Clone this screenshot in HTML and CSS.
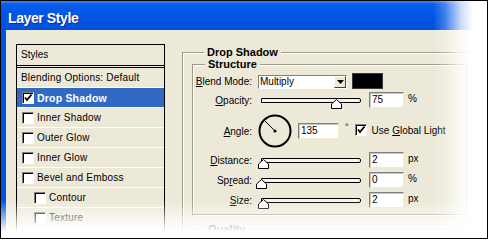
FILE: index.html
```html
<!DOCTYPE html>
<html lang="en">
  <head>
    <meta charset="UTF-8" />
    <title>Layer Style</title>
    <link rel="stylesheet" href="styles.css">
  </head>
  <body>
    <div class="shot">
      <div class="titlebar">Layer Style</div>

      <div class="window">
        <div class="styles-list">
          <div class="list-head">Styles</div>
          <div class="list-row">Blending Options: Default</div>
          <div class="list-row selected">
            <span class="check">
              <svg width="10" height="10" viewBox="0 0 10 10"><path d="M2 4.5 L4 7 L8.5 1.5" fill="none" stroke="#000" stroke-width="1.8"/></svg>
            </span>
            <span>Drop Shadow</span>
          </div>
          <div class="list-row"><span class="check"></span><span>Inner Shadow</span></div>
          <div class="list-row"><span class="check"></span><span>Outer Glow</span></div>
          <div class="list-row"><span class="check"></span><span>Inner Glow</span></div>
          <div class="list-row"><span class="check"></span><span>Bevel and Emboss</span></div>
          <div class="list-row sub"><span class="check"></span><span>Contour</span></div>
          <div class="list-row sub"><span class="check"></span><span>Texture</span></div>
        </div>

        <div class="settings">
          <div class="group">
            <div class="group-title">Drop Shadow</div>
            <div class="group inner">
              <div class="group-title">Structure</div>

              <div class="row row-blend">
                <span class="label"><u>B</u>lend Mode:</span>
                <span class="select">
                  <span class="select-text">Multiply</span>
                  <span class="select-btn">
                    <svg width="7" height="4" viewBox="0 0 7 4"><path d="M0 0 H7 L3.5 4 Z" fill="#000"/></svg>
                  </span>
                </span>
                <span class="swatch"></span>
              </div>

              <div class="row row-opacity">
                <span class="label"><u>O</u>pacity:</span>
                <span class="slider">
                  <span class="track"></span>
                  <svg class="thumb" style="left: 81px" width="11" height="10" viewBox="0 0 11 10"><path d="M5.5 0.5 L10.5 5 V9.5 H0.5 V5 Z" fill="#fff" stroke="#000"/></svg>
                </span>
                <span class="field">75</span>
                <span class="unit">%</span>
              </div>

              <div class="row row-angle">
                <span class="label"><u>A</u>ngle:</span>
                <svg class="dial" width="34" height="34" viewBox="0 0 34 34">
                  <circle cx="17" cy="17" r="15.5" fill="none" stroke="#000" stroke-width="2"/>
                  <path d="M17 17 L6.5 6.5" stroke="#000" stroke-width="1"/>
                  <circle cx="17" cy="17" r="1.6" fill="#000"/>
                </svg>
                <span class="field wide">135</span>
                <span class="degree">°</span>
                <span class="check">
                  <svg width="10" height="10" viewBox="0 0 10 10"><path d="M2 4.5 L4 7 L8.5 1.5" fill="none" stroke="#000" stroke-width="1.8"/></svg>
                </span>
                <span class="check-label">Use <u>G</u>lobal Light</span>
              </div>

              <div class="row">
                <span class="label"><u>D</u>istance:</span>
                <span class="slider">
                  <span class="track"></span>
                  <svg class="thumb" style="left: 8px" width="11" height="10" viewBox="0 0 11 10"><path d="M5.5 0.5 L10.5 5 V9.5 H0.5 V5 Z" fill="#fff" stroke="#000"/></svg>
                </span>
                <span class="field">2</span>
                <span class="unit">px</span>
              </div>

              <div class="row">
                <span class="label">Sp<u>r</u>ead:</span>
                <span class="slider">
                  <span class="track"></span>
                  <svg class="thumb" style="left: 6px" width="11" height="10" viewBox="0 0 11 10"><path d="M5.5 0.5 L10.5 5 V9.5 H0.5 V5 Z" fill="#fff" stroke="#000"/></svg>
                </span>
                <span class="field">0</span>
                <span class="unit">%</span>
              </div>

              <div class="row">
                <span class="label"><u>S</u>ize:</span>
                <span class="slider">
                  <span class="track"></span>
                  <svg class="thumb" style="left: 8px" width="11" height="10" viewBox="0 0 11 10"><path d="M5.5 0.5 L10.5 5 V9.5 H0.5 V5 Z" fill="#fff" stroke="#000"/></svg>
                </span>
                <span class="field">2</span>
                <span class="unit">px</span>
              </div>
            </div>

            <div class="group inner quality">
              <div class="group-title">Quality</div>
            </div>
          </div>
        </div>
      </div>

      <div class="fade-right"></div>
      <div class="fade-bottom"></div>
    </div>
  </body>
</html>
```

FILE: styles.css
```css
* {
  box-sizing: border-box;
}
body {
  margin: 0;
  background: #fff;
  font-family: "Liberation Sans", Arial, sans-serif;
  font-size: 10px;
  color: #000;
}
.shot {
  position: relative;
  width: 488px;
  height: 239px;
  border: 1px solid #000;
  overflow: hidden;
  display: flex;
  flex-direction: column;
}
.titlebar {
  flex: none;
  height: 29px;
  padding: 7px 0 0 7px;
  line-height: 20px;
  font-size: 14px;
  font-weight: bold;
  letter-spacing: -0.4px;
  color: #fff;
  text-shadow: 1px 1px 0 #0b2a9c;
  background: linear-gradient(#3d8cff 0, #0b5de9 3px, #0056e6 45%, #0050da 100%);
}
.window {
  flex: 1;
  display: flex;
  align-items: flex-start;
  background: #ece9d8;
  border-left: 5px solid #0052e0;
  padding: 14px 0 0 10px;
}

/* styles list */
.styles-list {
  flex: none;
  width: 149px;
  height: 194px;
  border: 1px solid #000;
  border-bottom: 0;
}
.list-head {
  height: 23px;
  line-height: 20px;
  padding-left: 4px;
  border-bottom: 3px double #000;
}
.list-row {
  display: flex;
  align-items: center;
  gap: 3px;
  height: 20px;
  padding-left: 4px;
  border-bottom: 1px solid #fff;
  white-space: nowrap;
  letter-spacing: 0.2px;
}
.list-row .check {
  margin-left: 1px;
}
.list-row.sub {
  padding-left: 16px;
}
.list-row.selected {
  background: #316ac5;
  color: #fff;
  font-weight: bold;
  font-size: 10.5px;
}
.check {
  flex: none;
  display: flex;
  align-items: center;
  justify-content: center;
  width: 12px;
  height: 12px;
  background: #fff;
  border: 1px solid;
  border-color: #808080 #fff #fff #808080;
  box-shadow: inset 1px 1px 0 #000;
}

/* settings panel */
.settings {
  flex: 1;
  margin: 8px 10px 0 17px;
}
.group {
  padding: 0 9px;
  border: 1px solid #9d9a8b;
  box-shadow: 1px 1px 0 #fff, inset 1px 1px 0 #fff;
}
.group-title {
  display: table;
  margin: -7px 0 0 12px;
  padding: 0 3px;
  line-height: 12px;
  font-size: 11px;
  font-weight: bold;
  background: #ece9d8;
}
.group.inner {
  margin-top: 6px;
  padding: 0 0 4px 0;
}
.group.quality {
  margin-top: 14px;
  height: 30px;
}
.row {
  display: flex;
  align-items: center;
  height: 20px;
  white-space: nowrap;
}
.label {
  flex: none;
  width: 59px;
  text-align: right;
}
.row-blend {
  height: 17px;
  margin-top: 2px;
  align-items: flex-end;
}
.row-blend .label {
  line-height: 14px;
}
.row-opacity {
  margin-top: 1px;
}
.row-angle {
  height: 38px;
  margin-top: 2px;
}
.select {
  display: flex;
  width: 89px;
  height: 14px;
  margin-left: 6px;
  background: #fff;
  border: 1px solid;
  border-color: #808080 #fff #fff #808080;
}
.select-text {
  flex: 1;
  padding-left: 1px;
  line-height: 12px;
}
.select-btn {
  display: flex;
  align-items: center;
  justify-content: center;
  width: 12px;
  background: #ece9d8;
  border: 1px solid;
  border-color: #fff #404040 #404040 #fff;
}
.swatch {
  width: 31px;
  height: 16px;
  margin-left: 5px;
  background: #000;
  border: 1px solid #3a3a3a;
}
.slider {
  position: relative;
  flex: none;
  width: 106px;
  height: 20px;
  margin-left: 3px;
}
.track {
  position: absolute;
  left: 6px;
  top: 8px;
  width: 100px;
  height: 5px;
  border: 1px solid #000;
  border-radius: 0 2px 2px 0;
  background: #f6f4ea;
}
.thumb {
  position: absolute;
  top: 9px;
  margin-left: -5px;
}
.field {
  flex: none;
  width: 35px;
  height: 16px;
  margin-left: 8px;
  padding-left: 2px;
  line-height: 13px;
  background: #fff;
  border: 1px solid;
  border-color: #808080 #ece9d8 #ece9d8 #808080;
  box-shadow: inset 1px 1px 0 #c8c5b6;
}
.field.wide {
  width: 41px;
  margin-left: 6px;
}
.unit {
  margin-left: 4px;
  margin-top: -4px;
}
.dial {
  flex: none;
  margin-left: 6px;
}
.degree {
  align-self: flex-start;
  margin: 10px 0 0 6px;
  font-size: 9px;
}
.row-angle .check {
  margin-left: 6px;
  margin-top: -2px;
}
.check-label {
  margin-left: 5px;
  margin-top: -2px;
}

/* white fade over the right and bottom edges */
.fade-right {
  position: absolute;
  top: 0;
  right: 0;
  bottom: 0;
  width: 54px;
  background: linear-gradient(to right, rgba(255, 255, 255, 0) 0, rgba(255, 255, 255, 0.25) 12px, rgba(255, 255, 255, 0.8) 28px, #fff 40px);
}
.fade-bottom {
  position: absolute;
  left: 0;
  right: 0;
  bottom: 0;
  height: 38px;
  background: linear-gradient(rgba(255, 255, 255, 0) 0, rgba(255, 255, 255, 0.5) 16px, #fff 32px);
}
```
